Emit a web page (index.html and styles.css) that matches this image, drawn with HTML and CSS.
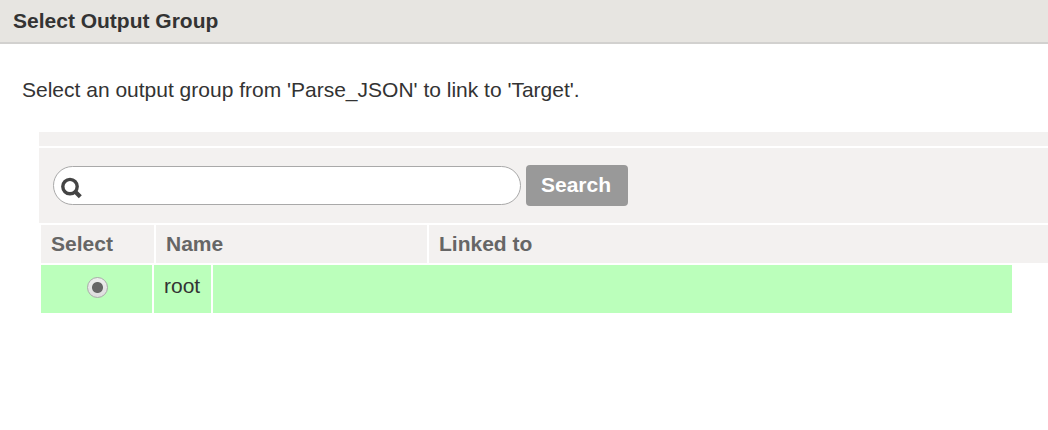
FILE: index.html
```html
<!DOCTYPE html>
<html lang="en">
<head>
<meta charset="utf-8">
<meta name="viewport" content="width=device-width, initial-scale=1">
<title>Select Output Group</title>
<link rel="stylesheet" href="styles.css">
</head>
<body>
<header class="dialog-header">
  <h1 class="dialog-title">Select Output Group</h1>
</header>
<main class="dialog-body">
  <p class="intro">Select an output group from 'Parse_JSON' to link to 'Target'.</p>
  <section class="panel">
    <div class="panel-strip"></div>
    <form class="toolbar" role="search">
      <label class="search-box">
        <svg class="search-icon" viewBox="0 0 22 22" aria-hidden="true">
          <path d="M13.8 14.2 L19.3 19.7" fill="none" stroke="#444" stroke-width="4.2"/>
          <circle cx="9" cy="9.6" r="7.2" fill="none" stroke="#444" stroke-width="3.4"/>
        </svg>
        <input class="search-input" type="text" aria-label="Search groups">
      </label>
      <button class="search-button" type="button">Search</button>
    </form>
    <table class="groups">
      <thead>
        <tr class="head-row">
          <th scope="col">Select</th>
          <th scope="col">Name</th>
          <th scope="col">Linked to</th>
        </tr>
      </thead>
      <tbody>
        <tr class="group-row">
          <td class="select-cell"><input class="group-radio" type="radio" name="group" id="group-root" checked></td>
          <td><label for="group-root">root</label></td>
          <td></td>
        </tr>
      </tbody>
    </table>
  </section>
</main>
</body>
</html>
```
FILE: styles.css
```css
* {
  box-sizing: border-box;
}

body {
  margin: 0;
  background: #fff;
  color: #333;
  font-family: "Liberation Sans", Arial, sans-serif;
  font-size: 21px;
  line-height: 24px;
}

.dialog-header {
  padding: 9px 13px;
  background: #e7e5e1;
  border-bottom: 2px solid #d2d1cf;
}

.dialog-title {
  margin: 0;
  font-size: 21px;
  line-height: 24px;
}

.intro {
  margin: 0;
  padding: 34px 22px 30px;
}

.panel {
  display: flex;
  flex-direction: column;
  gap: 2px;
  margin-left: 39px;
}

.panel-strip {
  height: 14px;
  background: #f3f1f0;
}

.toolbar {
  display: flex;
  align-items: center;
  gap: 5px;
  padding: 17px 14px;
  background: #f3f1f0;
}

.search-box {
  display: flex;
  align-items: center;
  width: 468px;
  height: 39px;
  padding: 4px 16px 0 7px;
  border: 1px solid #a9a9a9;
  border-radius: 20px;
  background: #fff;
}

.search-icon {
  flex: none;
  width: 22px;
  height: 22px;
}

.search-input {
  flex: 1;
  min-width: 0;
  padding: 0 4px;
  border: 0;
  outline: 0;
  background: transparent;
  font: inherit;
}

.search-button {
  padding: 8px 17px 9px 15px;
  border: 0;
  border-radius: 4px;
  background: #999;
  color: #fff;
  font: bold 21px/24px "Liberation Sans", Arial, sans-serif;
}

.groups,
.groups thead,
.groups tbody {
  display: block;
}

.groups {
  padding-left: 2px;
}

.head-row,
.group-row {
  display: grid;
  gap: 2px;
}

.head-row {
  grid-template-columns: 113px 271px 1fr;
  margin-bottom: 2px;
}

.head-row th {
  padding: 7px 10px;
  background: #f3f1f0;
  color: #666;
  text-align: left;
}

.group-row {
  grid-template-columns: 111px 57px 1fr;
  margin-right: 36px;
}

.group-row td {
  padding: 9px 10px 15px;
  background: #bfb;
}

.group-row .select-cell {
  padding: 12px 0 0 2px;
  text-align: center;
}

.group-radio {
  appearance: none;
  width: 21px;
  height: 21px;
  margin: 0;
  border: 1px solid #aaa;
  border-radius: 50%;
  background: radial-gradient(circle, #666 5px, transparent 6px), linear-gradient(#eee, #ddd);
  vertical-align: top;
}
```
